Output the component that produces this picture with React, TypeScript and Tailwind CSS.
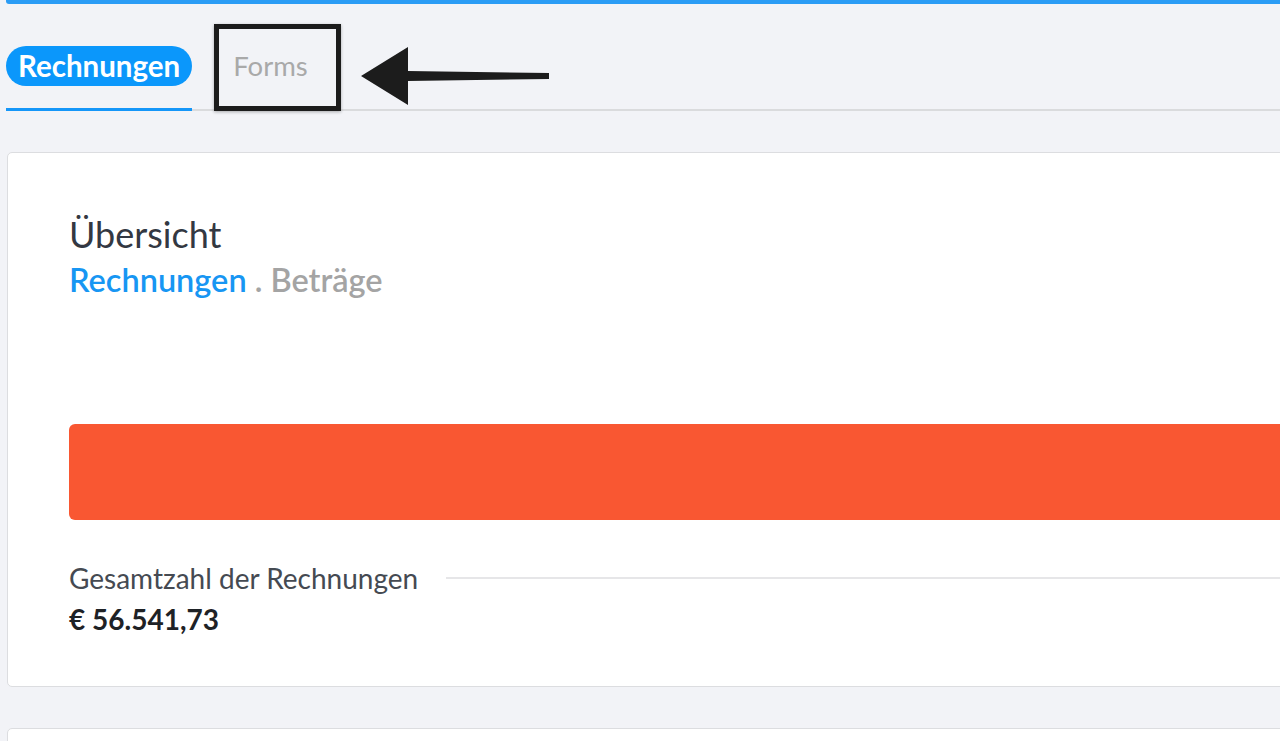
import React from 'react';

const App: React.FC = () => {
  return (
    <div className="min-h-[741px] w-[1280px] overflow-hidden bg-[#f2f3f7]" style={{ fontFamily: 'Lato, "Open Sans", sans-serif' }}>
      {/* top accent */}
      <div className="ml-[6px] h-[4px] rounded-bl-[3px] bg-[#2b9cf5]" />

      {/* Tabs */}
      <div className="relative ml-[6px] flex border-b-2 border-[#dadbdd]">
        <div className="-mb-[2px] border-b-[3px] border-[#1596f8] pt-[42px] pb-[22px]">
          <div className="flex h-[40px] items-center rounded-full bg-[#0b97fb] px-[12px] text-[29.5px] font-bold text-white">
            Rechnungen
          </div>
        </div>
        <div className="relative ml-[41px] mt-[42px] flex h-[40px] items-center self-start text-[27.5px] text-[#a9a9a9]">
          Forms
          {/* annotation box */}
          <div className="absolute left-[-19px] top-[-22px] h-[87px] w-[127px] border-[5px] border-[#1c1c1c] shadow-[0_1px_3px_rgba(0,0,0,0.3)]" />
        </div>
        {/* annotation arrow */}
        <svg className="absolute left-[349px] top-[38px]" width="200" height="68" viewBox="0 0 200 68">
          <path d="M6 34 L53 5 L53 29 L194 31 L194 37 L53 39 L53 63 Z" fill="#1c1c1c" />
        </svg>
      </div>

      {/* Overview card */}
      <div className="mt-[41px] ml-[7px] mr-[-12px] h-[535px] rounded-[5px] border border-[#dcdde0] bg-white pl-[61px] pt-[62px]">
        <div className="text-[36px] leading-[38px] text-[#333842]">Übersicht</div>
        <div className="mt-[9px] text-[32.5px] font-semibold leading-[36px]">
          <span className="text-[#1796f3]">Rechnungen</span>
          <span className="text-[#a4a4a4]"> . Beträge</span>
        </div>

        <div className="mt-[126px] h-[96px] rounded-l-[6px] bg-[#f95732]" />

        <div className="mt-[42px] flex items-center">
          <span className="text-[28px] leading-[32px] text-[#454a52]">Gesamtzahl der Rechnungen</span>
          <div className="ml-[28px] h-[2px] flex-1 bg-[#e6e6e8]" />
        </div>
        <div className="mt-[9px] text-[28px] font-bold leading-[32px] text-[#1e2226]">€ 56.541,73</div>
      </div>

      {/* next card */}
      <div className="mt-[41px] ml-[7px] mr-[-12px] h-[60px] rounded-[5px] border border-[#dcdde0] bg-white" />
    </div>
  );
};

export default App;
